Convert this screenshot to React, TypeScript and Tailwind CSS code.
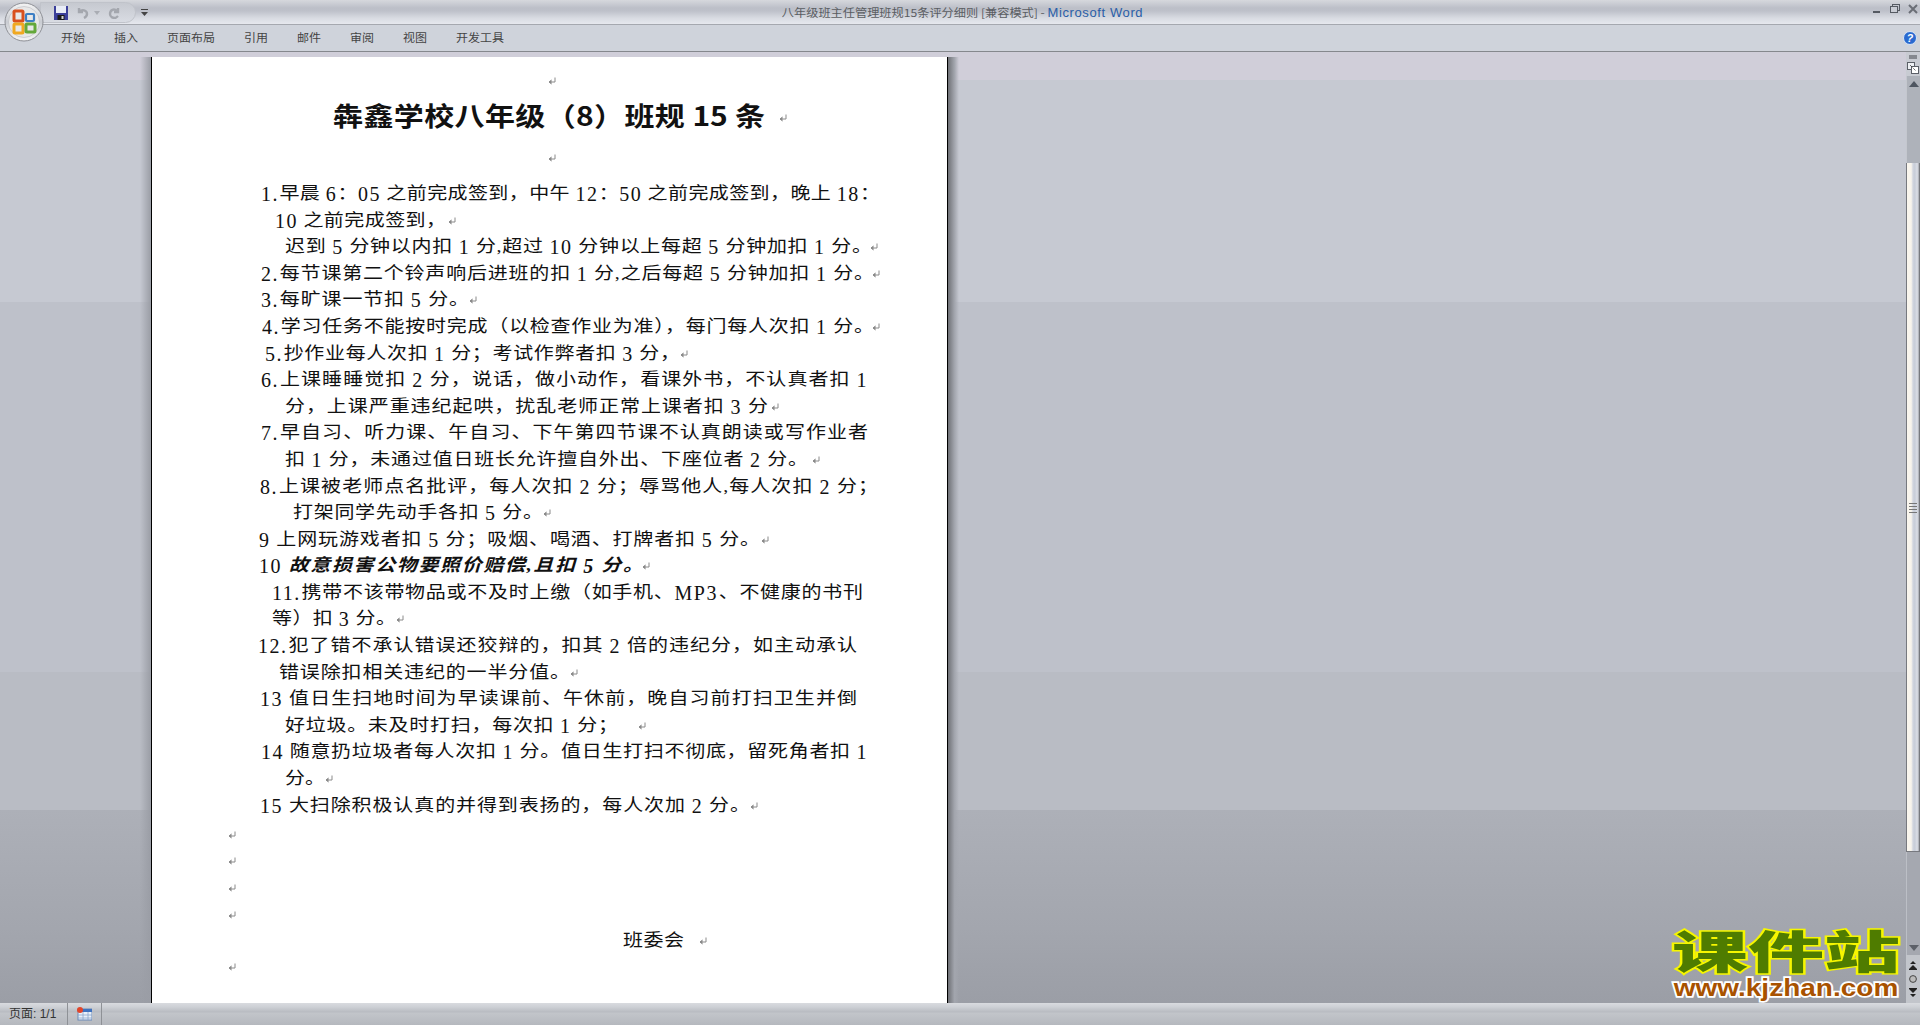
const Mark = ({ className = "" }: { className?: string }) => (
  <svg viewBox="0 0 9 9" className={`w-[9px] h-[9px] shrink-0 ${className}`} fill="none" stroke="#8a8a8a" strokeWidth="1">
    <path d="M7 0.5 V5 H1.5" />
    <path d="M3.5 3 L1 5 L3.5 7" fill="#8a8a8a" />
  </svg>
);

// Digits in the reference's font stand taller than its ideographs.
const R = (s: string) =>
  s.split(/([0-9]+\.?|MP3)/).map((p, i) =>
    i % 2 === 1 ? (
      <span key={i} className="inline-block scale-y-[1.25] tracking-[1.5px]">{p}</span>
    ) : (
      p
    )
  );

type L = { t: React.ReactNode; c: string; m?: string };

const lines: L[] = [
  { t: R("1.早晨 6：05 之前完成签到，中午 12：50 之前完成签到，晚上 18："), c: "ml-[108px] w-[619px]" },
  { t: R("10 之前完成签到，"), c: "ml-[122px] w-[171px]", m: "ml-[2px]" },
  { t: R("迟到 5 分钟以内扣 1 分,超过 10 分钟以上每超 5 分钟加扣 1 分。"), c: "ml-[132px] w-[587px]", m: "-ml-[2px]" },
  { t: R("2.每节课第二个铃声响后进班的扣 1 分,之后每超 5 分钟加扣 1 分。"), c: "ml-[108px] w-[613px]", m: "-ml-[2px]" },
  { t: R("3.每旷课一节扣 5 分。"), c: "ml-[108px] w-[208px]", m: "ml-[0px]" },
  { t: R("4.学习任务不能按时完成（以检查作业为准），每门每人次扣 1 分。"), c: "ml-[109px] w-[612px]", m: "-ml-[2px]" },
  { t: R("5.抄作业每人次扣 1 分；考试作弊者扣 3 分，"), c: "ml-[112px] w-[415px]", m: "ml-[0px]" },
  { t: R("6.上课睡睡觉扣 2 分，说话，做小动作，看课外书，不认真者扣 1"), c: "ml-[108px] w-[607px]" },
  { t: R("分，上课严重违纪起哄，扰乱老师正常上课者扣 3 分"), c: "ml-[132px] w-[483px]", m: "ml-[3px]" },
  { t: R("7.早自习、听力课、午自习、下午第四节课不认真朗读或写作业者"), c: "ml-[108px] w-[607px]" },
  { t: R("扣 1 分，未通过值日班长允许擅自外出、下座位者 2 分。"), c: "ml-[132px] w-[523px]", m: "ml-[4px]" },
  { t: R("8.上课被老师点名批评，每人次扣 2 分；辱骂他人,每人次扣 2 分；"), c: "ml-[107px] w-[618px]" },
  { t: R("打架同学先动手各扣 5 分。"), c: "ml-[140px] w-[250px]", m: "ml-[0px]" },
  { t: R("9 上网玩游戏者扣 5 分；吸烟、喝酒、打牌者扣 5 分。"), c: "ml-[106px] w-[501px]", m: "ml-[1px]" },
  { t: <>{R("10 ")}<b className="italic">{R("故意损害公物要照价赔偿,且扣 5 分。")}</b></>, c: "ml-[106px] w-[384px]", m: "-ml-[1px]" },
  { t: R("11.携带不该带物品或不及时上缴（如手机、MP3、不健康的书刊"), c: "ml-[119px] w-[591px]" },
  { t: R("等）扣 3 分。"), c: "ml-[119px] w-[124px]", m: "ml-[0px]" },
  { t: R("12.犯了错不承认错误还狡辩的，扣其 2 倍的违纪分，如主动承认"), c: "ml-[105px] w-[599px]" },
  { t: R("错误除扣相关违纪的一半分值。"), c: "ml-[126px] w-[291px]", m: "ml-[0px]" },
  { t: R("13 值日生扫地时间为早读课前、午休前，晚自习前打扫卫生并倒"), c: "ml-[107px] w-[597px]" },
  { t: R("好垃圾。未及时打扫，每次扣 1 分；"), c: "ml-[132px] w-[333px]", m: "ml-[20px]" },
  { t: R("14 随意扔垃圾者每人次扣 1 分。值日生打扫不彻底，留死角者扣 1"), c: "ml-[108px] w-[607px]" },
  { t: R("分。"), c: "ml-[132px] w-[38px]", m: "ml-[2px]" },
  { t: R("15 大扫除积极认真的并得到表扬的，每人次加 2 分。"), c: "ml-[107px] w-[490px]", m: "ml-[0px]" },
];

export default function App() {
  return (
    <div className="h-[1025px] w-[1920px] overflow-hidden flex flex-col relative font-['Noto_Sans_CJK_SC',sans-serif] bg-[#cfd3db]">
      {/* title bar */}
      <div className="h-[25px] shrink-0 border-b border-[#a5a8af] flex items-center justify-center pl-[5px] text-[12.2px] leading-none bg-[linear-gradient(180deg,#d6d8dd_0,#bcbfc8_8px,#bec1ca_11px,#d8dbe2_18px,#e6e8ee_24px)]">
        <span className="text-[#5a5d62] scale-y-90">八年级班主任管理班规15条评分细则 [兼容模式] -&nbsp;</span>
        <span className="text-[#2a5ea8] font-['Liberation_Sans',sans-serif] text-[13px] tracking-[0.6px]">Microsoft Word</span>
      </div>
      {/* tabs */}
      <div className="h-[27px] shrink-0 border-b border-[#85888d] bg-[#cfd3db] flex items-center pl-[61px] gap-[29px] text-[12px] leading-none text-[#444] pb-[1px]">
        {["开始", "插入", "页面布局", "引用", "邮件", "审阅", "视图", "开发工具"].map((t) => (
          <span key={t} className="scale-y-90">{t}</span>
        ))}
      </div>

      {/* workspace */}
      <div className="flex-1 min-h-0 flex bg-[linear-gradient(180deg,#d0ced9_0,#d0ced9_28px,#c6c9d2_28px,#c6c9d2_250px,#bec1ca_250px,#bec1ca_620px,#b9bcc4_620px,#b9bcc4_758px,#adb0b8_758px,#a3a6ae_876px,#9b9ea6_951px)]">
        <div className="w-[140px] shrink-0" />
        <div className="w-[11px] shrink-0 mt-[5px] bg-[linear-gradient(90deg,transparent,#9a9da5)]" />
        {/* page */}
        <div className="w-[797px] shrink-0 mt-[5px] pt-[12px] pl-[1px] bg-white border-x border-black text-[20px] leading-none text-[#111] font-['Liberation_Serif','Noto_Sans_CJK_SC',serif]">
          <div className="h-[24px] flex items-center justify-start pl-[395px]"><Mark /></div>
          <div className="h-[44px] flex items-center pl-[180px]">
            <h1 className="w-[432px] text-[30px] font-bold whitespace-nowrap scale-y-[0.87] [text-align-last:justify] font-['Noto_Sans_CJK_SC',sans-serif]">犇鑫学校八年级（8）班规 15 条</h1>
            <Mark className="ml-[14px] mt-[6px]" />
          </div>
          <div className="h-[42.7px] flex items-center pl-[395px]"><Mark /></div>

          {lines.map((l, i) => (
            <div key={i} className="h-[26.6px] flex items-center">
              <div className={`${l.c} whitespace-nowrap scale-y-[0.87] [text-align-last:justify] shrink-0`}>{l.t}</div>
              {l.m && <Mark className={`${l.m} mt-[3px]`} />}
            </div>
          ))}
          <div className="mt-[4px]">
            {[0, 1, 2, 3].map((i) => (
              <div key={i} className="h-[26.6px] flex items-center pl-[75px]"><Mark /></div>
            ))}
          </div>
          <div className="h-[26.6px] -mt-[1.5px] flex items-center pl-[470px]">
            <span className="w-[61px] whitespace-nowrap scale-y-[0.87] [text-align-last:justify]">班委会</span>
            <Mark className="ml-[15px] mt-[3px]" />
          </div>
          <div className="h-[26.6px] mt-[1px] flex items-center pl-[75px]"><Mark /></div>
        </div>
        <div className="w-[11px] shrink-0 mt-[5px] bg-[linear-gradient(90deg,#6f7176,#a3a6ae_60%,transparent)]" />
        <div className="flex-1" />

        {/* scrollbar */}
        <div className="w-[14px] shrink-0 flex flex-col items-stretch">
          <div className="h-[24px] shrink-0 bg-[#c8cbd2] flex flex-col items-center pt-[3px]">
            <div className="w-[8px] h-[4px] bg-[#85888f]" />
            <svg viewBox="0 0 12 12" className="w-[12px] h-[12px] mt-[3px]">
              <rect x="0.5" y="0.5" width="7" height="7" fill="#eef0f4" stroke="#5c6068" />
              <rect x="4.5" y="4.5" width="7" height="7" fill="#fff" stroke="#5c6068" />
              <path d="M3 3 L9 9" stroke="#333" strokeWidth="1" strokeDasharray="1 1" />
            </svg>
          </div>
          <div className="h-[87px] shrink-0 bg-[#aeb2ba] border-l border-[#c4c7ce] flex justify-center pt-[5px]">
            <svg viewBox="0 0 10 6" className="w-[10px] h-[6px]"><path d="M5 0 L10 6 H0 Z" fill="#4e5560" /></svg>
          </div>
          <div className="h-[689px] shrink-0 border-x border-b border-[#77797f] bg-[linear-gradient(90deg,#faf6ee_0,#f8f4ec_35%,#d0d4de_50%,#c8cdd8_65%,#dcdfe7_85%,#a5a7ae_100%)] flex flex-col items-center pt-[340px] gap-[2px]">
            <div className="w-[8px] h-[1px] bg-[#777]" />
            <div className="w-[8px] h-[1px] bg-[#777]" />
            <div className="w-[8px] h-[1px] bg-[#777]" />
            <div className="w-[8px] h-[1px] bg-[#777]" />
          </div>
          <div className="flex-1 bg-[#a5a8b0] border-l border-[#bcbfc6] flex flex-col items-center justify-end pb-[4px]">
            <svg viewBox="0 0 10 6" className="w-[10px] h-[6px]"><path d="M5 6 L10 0 H0 Z" fill="#5c6068" /></svg>
          </div>
          <div className="h-[48px] shrink-0 bg-[#c2c5cb] flex flex-col items-center justify-around py-[3px]">
            <svg viewBox="0 0 8 9" className="w-[8px] h-[9px]"><path d="M4 0 L7 3 H1 Z M4 4 L8 8 H0 Z M0 8 H8 V9 H0 Z" fill="#222" /></svg>
            <svg viewBox="0 0 8 8" className="w-[8px] h-[8px]"><circle cx="4" cy="4" r="3.4" fill="#bbb" stroke="#444" /></svg>
            <svg viewBox="0 0 8 9" className="w-[8px] h-[9px]"><path d="M0 0 H8 V1 H0 Z M0 1 H8 L4 5 Z M1 6 H7 L4 9 Z" fill="#222" /></svg>
          </div>
        </div>
      </div>

      {/* status bar */}
      <div className="h-[22px] shrink-0 flex items-center text-[12px] leading-none text-[#333] bg-[linear-gradient(180deg,#d9dbdf_0,#cdd0d5_4px,#b8bbc1_9px,#c2c5ca_10px,#b5b8be_22px)]">
        <span className="w-[68px] pl-[9px] h-full flex items-center border-r border-[#8e9196] font-['Liberation_Sans','Noto_Sans_CJK_SC',sans-serif] whitespace-nowrap">页面: 1/1</span>
        <span className="w-[34px] h-full flex items-center justify-center border-r border-[#8e9196]">
          <svg viewBox="0 0 15 14" className="w-[15px] h-[14px]">
            <rect x="1" y="2" width="14" height="11" fill="#e8f0fa" stroke="#6a8ab8" />
            <rect x="1" y="2" width="14" height="3" fill="#3f72bf" />
            <path d="M1 8 H15 M1 11 H15 M6 5 V13 M11 5 V13" stroke="#8aa6cc" strokeWidth="0.8" />
            <circle cx="3" cy="3" r="3" fill="#e2452a" />
          </svg>
        </span>
      </div>

      {/* ribbon overlays */}
      <div className="absolute left-[40px] top-[2px] w-[96px] h-[21px] rounded-r-[12px] border border-[#c0c3ca] bg-[linear-gradient(180deg,#c6c9d0,#d9dce3)] flex items-center pl-[13px]">
        <svg viewBox="0 0 14 14" className="w-[14px] h-[14px]">
          <rect width="14" height="14" fill="#3b3f9a" />
          <rect x="2" y="0" width="10" height="7" fill="#e8ecf6" />
          <rect x="3.5" y="9" width="7" height="5" fill="#1a1a1a" />
          <rect x="7.5" y="10" width="2" height="3" fill="#d5d5d5" />
        </svg>
        <svg viewBox="0 0 12 12" className="w-[12px] h-[12px] ml-[9px]" fill="none" stroke="#a4a7ae" strokeWidth="2.4"><path d="M2 1 V5 H6 M2 5 C5 2 10 3 10 7 C10 9 9 10 7 11" /></svg>
        <svg viewBox="0 0 6 4" className="w-[6px] h-[4px] ml-[5px]"><path d="M0 0 H6 L3 4 Z" fill="#aaadb4" /></svg>
        <svg viewBox="0 0 12 12" className="w-[12px] h-[12px] ml-[8px]" fill="none" stroke="#a4a7ae" strokeWidth="2.4"><path d="M10 1 V5 H6 M9 4 C6 1 2 3 2 7 C2 10 5 11 7 11 C8 11 9 10 10 9" /></svg>
      </div>
      <svg viewBox="0 0 7 7" className="absolute left-[141px] top-[9px] w-[7px] h-[7px]"><path d="M0 0 H7 V1 H0 Z M0 3 H7 L3.5 7 Z" fill="#444" /></svg>
      {/* office button */}
      <svg viewBox="0 0 40 40" className="absolute left-[4px] top-[2px] w-[40px] h-[40px]">
        <defs>
          <linearGradient id="orb" x1="0" y1="0" x2="0" y2="1">
            <stop offset="0" stopColor="#f4f4f4" />
            <stop offset="0.5" stopColor="#c9ccd2" />
            <stop offset="1" stopColor="#f6f6f6" />
          </linearGradient>
        </defs>
        <circle cx="20" cy="20" r="19" fill="url(#orb)" stroke="#8e9096" />
        <circle cx="20" cy="20" r="15.5" fill="#e8e8e8" stroke="#b0b2b8" strokeWidth="0.5" />
        <rect x="10" y="9" width="9" height="10" rx="1" fill="none" stroke="#d9501e" strokeWidth="3" />
        <rect x="22" y="12" width="8" height="7" rx="1" fill="none" stroke="#3d7fc4" strokeWidth="2.2" />
        <rect x="10" y="22" width="9" height="9" rx="1" fill="none" stroke="#f0a820" strokeWidth="3" />
        <rect x="22" y="22" width="9" height="8" rx="1" fill="none" stroke="#64a83a" strokeWidth="3" />
      </svg>
      {/* window controls */}
      <div className="absolute left-[1873px] top-[11px] w-[7px] h-[2px] bg-[#555a62]" />
      <svg viewBox="0 0 10 9" className="absolute left-[1890px] top-[4px] w-[10px] h-[9px]" fill="none" stroke="#555a62">
        <rect x="2.5" y="0.5" width="7" height="6" />
        <rect x="0.5" y="2.5" width="7" height="6" fill="#c9ccd4" />
      </svg>
      <svg viewBox="0 0 10 10" className="absolute left-[1908px] top-[4px] w-[10px] h-[10px]" stroke="#6a6e76" strokeWidth="2">
        <path d="M1 1 L9 9 M9 1 L1 9" />
      </svg>
      {/* help */}
      <svg viewBox="0 0 14 14" className="absolute left-[1903px] top-[31px] w-[14px] h-[14px]">
        <circle cx="7" cy="7" r="6.5" fill="#2a6ad0" stroke="#d8e4f6" />
        <text x="7" y="11" textAnchor="middle" fontSize="10.5" fontWeight="700" fontStyle="italic" fill="#fff" fontFamily="Liberation Sans">?</text>
      </svg>
      {/* watermark */}
      <div className="absolute left-[1668px] top-[926px] w-[236px] flex flex-col items-center pointer-events-none">
        <div className="h-[46px] w-[236px] flex items-center justify-center text-[76px] font-black leading-[46px] text-[#4f7c00] whitespace-nowrap scale-y-[0.6] [-webkit-text-stroke:5px_#f6f600] [paint-order:stroke_fill]">课件站</div>
        <div className="h-[24px] mt-[4px] font-['Liberation_Sans',sans-serif] font-bold text-[28px] leading-[24px] text-[#a85200] whitespace-nowrap scale-y-[0.85] [-webkit-text-stroke:4px_#ffffff] [paint-order:stroke_fill]">www.kjzhan.com</div>
      </div>
    </div>
  );
}
